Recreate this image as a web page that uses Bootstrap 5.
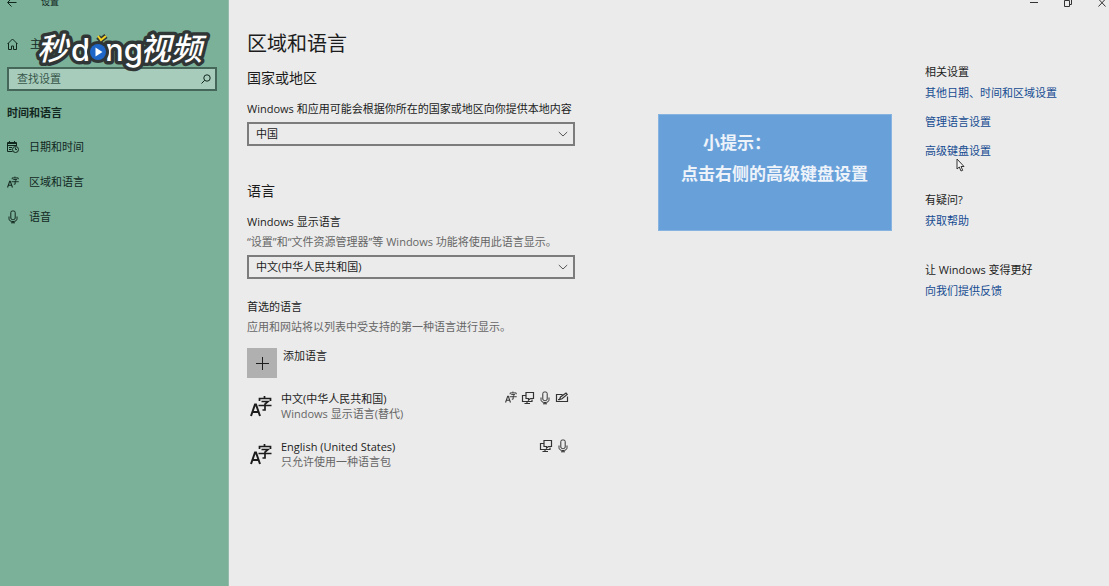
<!DOCTYPE html>
<html lang="zh-CN">
<head>
<meta charset="utf-8">
<meta name="viewport" content="width=device-width, initial-scale=1">
<title>设置</title>
<link href="https://cdn.jsdelivr.net/npm/bootstrap@5.3.0/dist/css/bootstrap.min.css" rel="stylesheet">
<style>
  body { background: #ebebeb; color: #1c1c1c; font-family: "Open Sans", "Noto Sans CJK SC", sans-serif; font-size: 11px; line-height: 16px; }
  svg { display: block; flex: none; }
  .ico { fill: none; stroke: currentColor; stroke-width: 1; }
  .side { width: 229px; flex: none; background: #7bb099; color: #12281f; border-right: 1px solid #94bcab; padding: 0 11px 0 7px; }
  .side-top { height: 8px; gap: 24px; }
  .side-top span { font-size: 9px; line-height: 12px; }
  .side-top button, .win button { color: inherit; line-height: 0; }
  .side a { color: inherit; }
  .home { margin-top: 28px; gap: 12px; }
  .find { height: 24px; margin-top: 15px; border: 2px solid #45675a; background: #a7ccbc; }
  .find input { font-size: 11px; line-height: 16px; color: #2c473c; }
  .find input::placeholder { color: #38574a; opacity: 1; }
  .side .cat { font-size: 11px; line-height: 16px; margin: 14px 0 18px; }
  .nav-gap { gap: 19px; }
  .nav-gap a { gap: 10px; }
  .brand-mark { left: 32px; top: 28px; overflow: visible; font-family: "Noto Sans CJK SC", sans-serif; font-weight: 500; }
  .brand-mark text { fill: #fff; stroke: #303635; stroke-width: 7; stroke-linejoin: round; paint-order: stroke; }
  .brand-mark .cjk { font-style: italic; font-size: 31px; }
  .brand-mark .lat { font-family: Inter, sans-serif; font-weight: 500; font-size: 31px; }
  .content { width: 328px; flex: none; margin-left: 18px; padding-top: 30px; }
  h1 { font-size: 20px; line-height: 28px; margin: 0 0 10px; font-weight: 400; }
  h2 { font-size: 14px; line-height: 20px; margin: 0 0 13px; font-weight: 400; }
  .sub { color: #666; }
  .pick { height: 24px; margin-top: 5px; padding: 0 24px 0 7px; font-size: 11px; line-height: 16px; color: #1c1c1c; border: 2px solid #7c7c7c; border-radius: 0; background-color: #ebebeb; background-size: 10px 10px; background-position: right 5px center;
    background-image: url("data:image/svg+xml,%3Csvg xmlns='http://www.w3.org/2000/svg' viewBox='0 0 10 10'%3E%3Cpath d='M.8 3l4.2 4 4.2-4' fill='none' stroke='%23555'/%3E%3C/svg%3E"); }
  .block-gap { margin-top: 35px; }
  .list-gap { margin-top: 20px; }
  .add { margin-top: 13px; gap: 6px; color: inherit; font-size: 11px; line-height: 16px; }
  .plus { width: 30px; height: 30px; background: #b0b0b0; }
  .langs { margin-top: 13px; line-height: 15px; }
  .langs li + li { margin-top: 18px; }
  .lang-ico { width: 30px; padding: 4px 0 0 3px; }
  .caps { gap: 4px; padding-right: 6px; color: #333; }
  .tip { width: 234px; height: 117px; margin: 114px 33px 0 auto; background: #68a1da; border: 1px solid #86b3e0; color: #eef3fa; font: 700 17px/31px "Noto Sans CJK SC", sans-serif; padding: 11px 0 0 22px; }
  .tip-head { padding-left: 22px; }
  .related { width: 166px; flex: none; margin: 64px 18px 0 0; }
  .related a { color: #164c92; }
  .rel-first { margin-top: 5px; }
  .rel-gap { margin-top: 13px; }
  .help-gap { margin-top: 33px; }
  .win { top: 0; right: 0; height: 8px; gap: 24px; padding-right: 2px; color: #333; }
  .pointer { left: 31px; top: 94px; }
</style>
</head>
<body>
<svg class="d-none">
  <symbol id="az" viewBox="0 0 22 22"><path d="M1 21L5 9.500h1L10 21M2.500 17h6" stroke-width="2"/><path d="M14.500 1v2.500M9.500 6V3.500h11V6M11.500 6.500h6.500L15 9.200V15h-2.500M8.500 10.500h13" stroke-width="1.700"/></symbol>
  <symbol id="mic" viewBox="0 0 12 14"><rect x="3.800" y="1" width="4.400" height="8.500" rx="1.500"/><path d="M2 6.500v2.200c0 1.800 1.300 2.800 4 2.800s4-1 4-2.800V6.500M6 11.500V13M4 12.800h4"/></symbol>
  <symbol id="screen" viewBox="0 0 14 14"><path d="M4.500 4.500h-3v6h9.500V8.500M6 10.500v2M3.500 12.500h5.500M5 1.500h7.500v6H9.500L7.500 9V7.500H5z" stroke-width="1.200"/></symbol>
  <symbol id="pen" viewBox="0 0 14 14"><path d="M7.500 3.500h-6v7h11v-5M4.500 8.500l1-2.500 5.500-4 1.200 1.500L7 7.800zM3 8.500h2" stroke-width="1.200"/></symbol>
</svg>
<div class="d-flex min-vh-100 position-relative">
  <aside class="side position-relative">
    <div class="side-top d-flex align-items-end">
      <button class="btn p-0 border-0" aria-label="返回"><svg class="ico" width="10" height="10" viewBox="0 0 10 10"><path d="M9.500 4.500H1M4.500.5l-4 4 4 4"/></svg></button>
      <span>设置</span>
    </div>
    <a href="#" class="home d-flex align-items-center text-decoration-none">
      <svg class="ico" width="11" height="12" viewBox="0 0 11 12"><path d="M.5 6l5-5 5 5M1.500 5v6.500h3V8h2v3.500h3V5"/></svg>主页</a>
    <div class="find d-flex align-items-center px-1">
      <input type="text" class="form-control border-0 rounded-0 bg-transparent shadow-none p-0 ps-1" placeholder="查找设置" aria-label="查找设置">
      <svg class="ico" width="10" height="10" viewBox="0 0 10 10"><circle cx="6" cy="4" r="3.200"/><path d="M3.700 6.300L.5 9.500"/></svg>
    </div>
    <h2 class="cat fw-bold">时间和语言</h2>
    <nav class="d-flex flex-column nav-gap">
      <a href="#" class="d-flex align-items-center text-decoration-none"><svg class="ico" width="12" height="12" viewBox="0 0 12 12"><path d="M5.500 10.500h-5v-9h9V5M.5 2.500h9M.5 4.500h9M2.500 0v2M7.500 0v2M2 6.500h3M2 8.500h2.500"/><circle cx="8.500" cy="8.500" r="3"/><path d="M8.500 6.500v2H10"/></svg>日期和时间</a>
      <a href="#" class="d-flex align-items-center text-decoration-none"><svg class="ico" width="12" height="12"><use href="#az"/></svg>区域和语言</a>
      <a href="#" class="d-flex align-items-center text-decoration-none"><svg class="ico" width="12" height="14"><use href="#mic"/></svg>语音</a>
    </nav>
    <svg class="brand-mark position-absolute" width="180" height="48" viewBox="0 0 180 48" role="img" aria-label="秒dong视频">
      <text class="cjk" x="5" y="32">秒</text><text class="cjk" x="108" y="32">视频</text>
      <text class="lat" x="39" y="33">d</text><text class="lat" x="73" y="33">ng</text>
      <circle cx="66" cy="24" r="11" fill="#303635"/><circle cx="66" cy="24" r="8" fill="#1e66c8"/><path d="M63.500 19.500l7 4.500-7 4.500z" fill="#fff"/>
      <path d="M66 9l3 3 5-4" fill="none" stroke="#303635" stroke-width="5"/><path d="M66 8l3 4 5-4" fill="none" stroke="#f5d321" stroke-width="2"/>
    </svg>
  </aside>

  <main class="d-flex flex-grow-1">
    <section class="content">
      <h1>区域和语言</h1>
      <h2>国家或地区</h2>
      <label class="d-block text-nowrap" for="region">Windows 和应用可能会根据你所在的国家或地区向你提供本地内容</label>
      <select id="region" class="form-select pick"><option>中国</option></select>
      <h2 class="block-gap">语言</h2>
      <label class="d-block" for="display">Windows 显示语言</label>
      <div class="sub mt-1">“设置”和“文件资源管理器”等 Windows 功能将使用此语言显示。</div>
      <select id="display" class="form-select pick"><option>中文(中华人民共和国)</option></select>
      <div class="list-gap">首选的语言</div>
      <div class="sub mt-1">应用和网站将以列表中受支持的第一种语言进行显示。</div>
      <button class="add btn border-0 p-0 d-flex align-items-start">
        <span class="plus d-flex align-items-center justify-content-center"><svg class="ico" width="13" height="13" viewBox="0 0 13 13"><path d="M6.500 0v13M0 6.500h13"/></svg></span>
        <span>添加语言</span>
      </button>
      <ul class="langs list-unstyled mb-0">
        <li class="d-flex align-items-start">
          <span class="lang-ico"><svg class="ico" width="22" height="22"><use href="#az"/></svg></span>
          <div class="flex-grow-1 ps-1"><div>中文(中华人民共和国)</div><div class="sub">Windows 显示语言(替代)</div></div>
          <div class="caps d-flex"><svg class="ico" width="12" height="12"><use href="#az"/></svg><svg class="ico" width="14" height="14"><use href="#screen"/></svg><svg class="ico" width="12" height="14"><use href="#mic"/></svg><svg class="ico" width="14" height="14"><use href="#pen"/></svg></div>
        </li>
        <li class="d-flex align-items-start">
          <span class="lang-ico"><svg class="ico" width="22" height="22"><use href="#az"/></svg></span>
          <div class="flex-grow-1 ps-1"><div>English (United States)</div><div class="sub">只允许使用一种语言包</div></div>
          <div class="caps d-flex"><svg class="ico" width="14" height="14"><use href="#screen"/></svg><svg class="ico" width="12" height="14"><use href="#mic"/></svg></div>
        </li>
      </ul>
    </section>
    <div class="tip"><div class="tip-head">小提示：</div><div class="text-nowrap">点击右侧的高级键盘设置</div></div>
    <aside class="related position-relative">
      <div>相关设置</div>
      <a href="#" class="d-block text-decoration-none rel-first">其他日期、时间和区域设置</a>
      <a href="#" class="d-block text-decoration-none rel-gap">管理语言设置</a>
      <a href="#" class="d-block text-decoration-none rel-gap">高级键盘设置</a>
      <div class="help-gap">有疑问?</div>
      <a href="#" class="d-block text-decoration-none rel-first">获取帮助</a>
      <div class="help-gap">让 Windows 变得更好</div>
      <a href="#" class="d-block text-decoration-none rel-first">向我们提供反馈</a>
      <svg class="pointer position-absolute" width="9" height="14" viewBox="0 0 9 14"><path d="M1 1v10l2.300-2 1.700 4 1.700-.7L5 8.500h3z" fill="#f4f4f4" stroke="#333"/></svg>
    </aside>
  </main>

  <div class="win position-absolute d-flex overflow-hidden">
    <button class="btn p-0 border-0" aria-label="最小化"><svg class="ico" width="10" height="8" viewBox="0 0 10 8"><path d="M1 2.500h8"/></svg></button>
    <button class="btn p-0 border-0" aria-label="还原"><svg class="ico" width="10" height="8" viewBox="0 0 10 8"><path d="M1.500.5h5v6h-5zM3.500.5V-1h5v5.500h-2"/></svg></button>
    <button class="btn p-0 border-0" aria-label="关闭"><svg class="ico" width="10" height="8" viewBox="0 0 10 8"><path d="M1.500-1l7 7.500M8.500-1l-7 7.500"/></svg></button>
  </div>
</div>
<script src="https://cdn.jsdelivr.net/npm/bootstrap@5.3.0/dist/js/bootstrap.bundle.min.js"></script>
</body>
</html>
